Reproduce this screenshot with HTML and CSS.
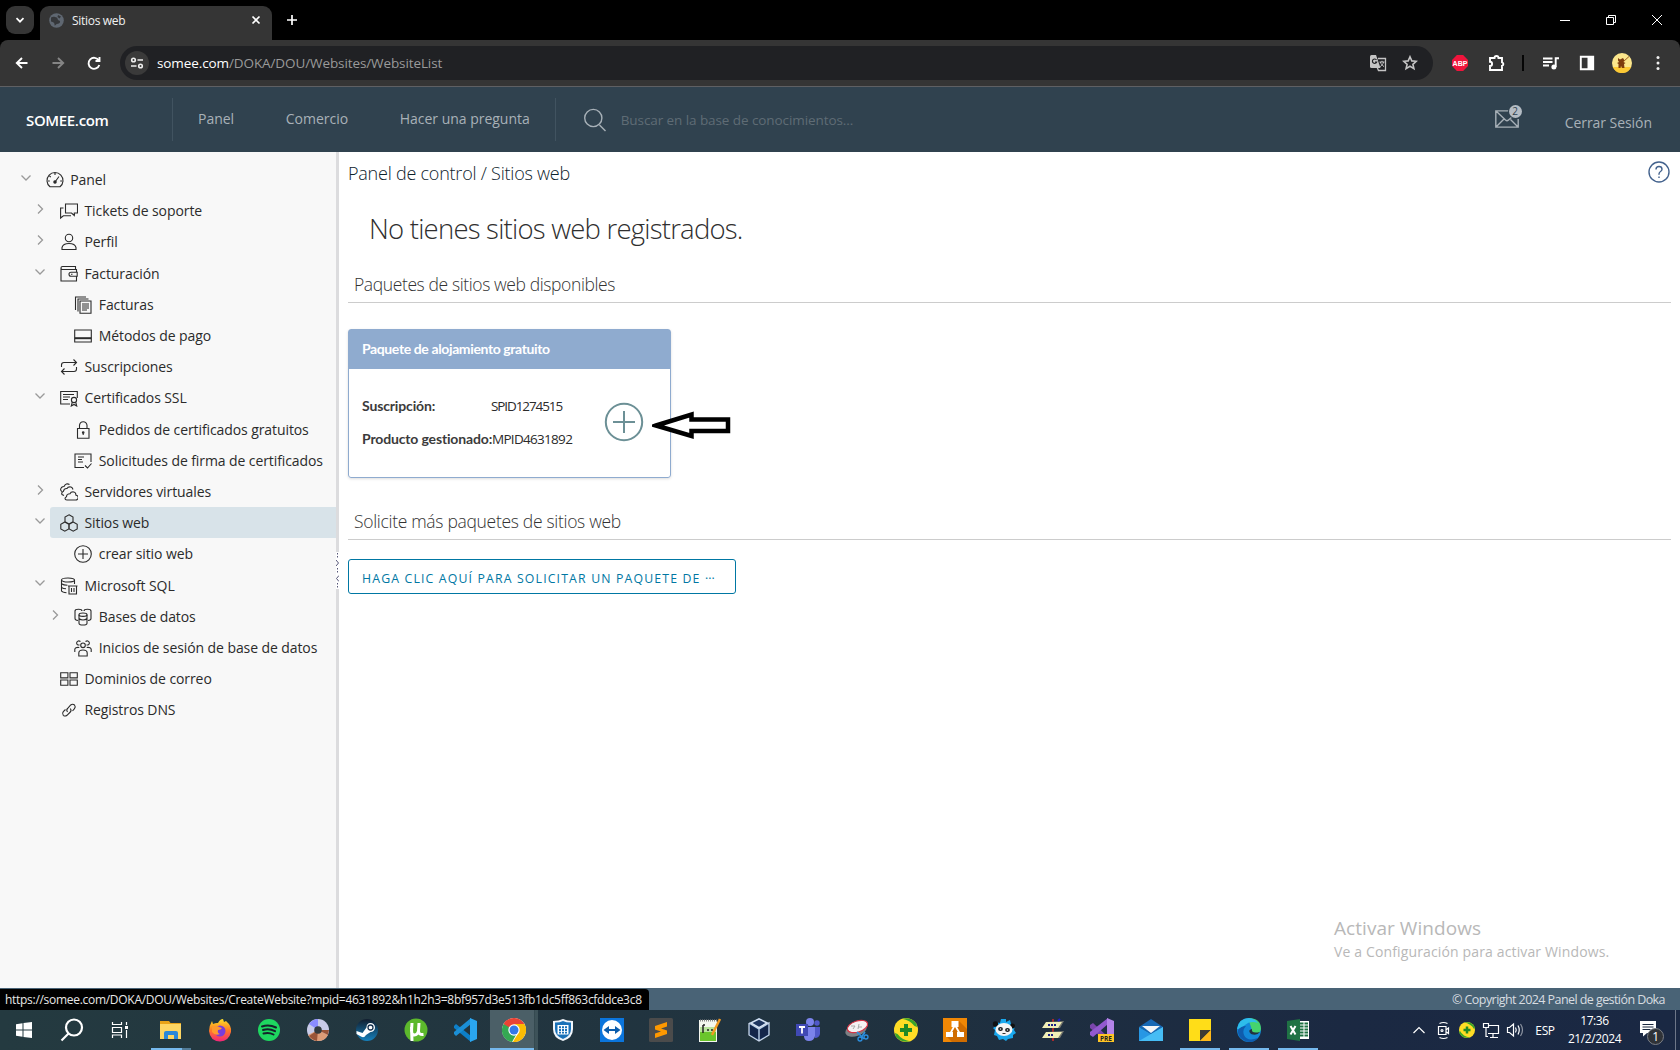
FILE: index.html
```html
<!DOCTYPE html>
<html lang="es">
<head>
<meta charset="utf-8">
<title>Sitios web</title>
<link rel="stylesheet" href="styles.css">
</head>
<body>
<svg class="defs" width="0" height="0">
  <symbol id="down" viewBox="0 0 16 16"><path d="M3.5 5.5 8 10l4.500-4.500"/></symbol>
  <symbol id="right" viewBox="0 0 16 16"><path d="M6 3.500 10.500 8 6 12.500"/></symbol>
</svg>

<div class="tabstrip">
  <button class="tab-search"><svg width="10" height="10" viewBox="0 0 10 10"><path d="M1.500 3.200 5 6.700l3.500-3.500"/></svg></button>
  <div class="tab">
    <svg class="globe" width="15" height="15" viewBox="0 0 15 15"><circle cx="7.500" cy="7.500" r="7.300" fill="#5f6771"/><path fill="#35373a" d="M2 4.500c3-1.500 4 0 5.500 0S8 7 10 7.500s1 3-1 3.200-2 1.500-3.500 1.800C6 10 4.500 9 2 8.500z M9 2l3 1.500-1.500 2L8.500 4z"/></svg>
    <span class="tab-title">Sitios web</span>
    <svg class="tab-close" width="10" height="10" viewBox="0 0 10 10"><path d="M1.500 1.500l7 7M8.500 1.500l-7 7"/></svg>
  </div>
  <svg class="tab-new" width="12" height="12" viewBox="0 0 12 12"><path d="M6 1v10M1 6h10"/></svg>
  <div class="window-buttons">
    <svg width="46" height="40" viewBox="0 0 46 40"><path d="M18 20.500h10"/></svg>
    <svg width="46" height="40" viewBox="0 0 46 40"><path d="M18.500 17.500h7v7h-7zM20.500 17v-1.500h7v7H26"/></svg>
    <svg width="46" height="40" viewBox="0 0 46 40"><path d="M18 15l10 10M28 15l-10 10"/></svg>
  </div>
</div>

<div class="toolbar-wrap"><div class="toolbar">
  <div class="nav-buttons">
    <svg width="36" height="20" viewBox="0 0 36 20"><path d="M23.500 10H13M18 5l-5.200 5 5.200 5"/></svg>
    <svg class="dim" width="36" height="20" viewBox="0 0 36 20"><path d="M12.500 10H23M18 5l5.200 5-5.200 5"/></svg>
    <svg width="36" height="20" viewBox="0 0 36 20"><path d="M22.800 7.500A5.500 5.500 0 1 0 23.300 12M23.500 4v4h-4"/></svg>
  </div>
  <div class="omnibox">
    <span class="site-info"><svg width="14" height="14" viewBox="0 0 14 14"><circle cx="3.500" cy="4" r="1.800"/><path d="M7.500 4H13M1 10h5.500"/><circle cx="10.500" cy="10" r="1.800"/></svg></span>
    <span class="url"><b>somee.com</b>/DOKA/DOU/Websites/WebsiteList</span>
    <svg class="translate" width="18" height="18" viewBox="0 0 18 18"><path fill="#c4c4c4" d="M1 2.500Q1 1 2.500 1H7l4.500 13H2.500Q1 14 1 12.500z"/><path d="M9 4.500h7.500v12H9.500L8 13" fill="none" stroke="#c4c4c4" stroke-width="1.300"/><path d="M10.500 8h5M13 6.800V8M11.300 8c.7 2 2 3.600 3.700 4.600M14.600 8c-.5 2-1.800 3.700-3.400 4.600" fill="none" stroke="#c4c4c4"/><path d="M7.500 6A2.200 2.200 0 1 0 7.700 8H6" fill="none" stroke="#202124" stroke-width="1.200"/></svg>
    <svg class="star" width="16" height="16" viewBox="0 0 16 16"><path d="M8 1.800l1.800 4.100 4.500.4-3.400 3 1 4.300L8 11.300l-3.900 2.300 1-4.300-3.400-3 4.500-.4z"/></svg>
  </div>
  <div class="extensions">
    <svg width="16" height="16" viewBox="0 0 16 16"><path fill="#f0143c" d="M4.900 0h6.200L16 4.900v6.200L11.100 16H4.900L0 11.100V4.900z"/><text x="8" y="10.600" class="abp">ABP</text></svg>
    <svg width="18" height="18" viewBox="0 0 18 18"><path class="line" d="M2 4h4.500a2 2 0 0 1 4 0H14v4.300a1.800 1.800 0 0 1 0 3.500V16H2v-4a2.100 2.100 0 0 0 0-4.200z"/></svg>
    <i class="divider"></i>
    <svg width="16" height="16" viewBox="0 0 16 16"><path class="line" d="M0 3.500h9.500M0 7h9.500M0 10.500h6M12.700 12V3.200H16"/><circle cx="10.900" cy="12" r="2.500" fill="#fff"/></svg>
    <svg width="16" height="16" viewBox="0 0 16 16"><path class="line" d="M1.800 1.800h12.400v12.400H1.800z"/><path fill="#fff" d="M8.500 2h6v12h-6z"/></svg>
    <svg class="avatar" width="20" height="20" viewBox="0 0 20 20"><circle cx="10" cy="10" r="10" fill="#fbe68c"/><path fill="#fcc934" d="M.8 14h18.400A10 10 0 0 1 .8 14z"/><path fill="#7d3b0d" d="M6 5l2 1.500L11 5l1.500 2.500L11.500 9l2 1-1.500 1 .5 4H10l-1-2-.5 2H6.500v-4L5 10l2-1-1-1.500z"/><path d="M11 9l6-5.500" stroke="#9a5b1e"/></svg>
    <svg class="kebab" width="4" height="16" viewBox="0 0 4 16"><circle cx="2" cy="2.500" r="1.500"/><circle cx="2" cy="8" r="1.500"/><circle cx="2" cy="13.500" r="1.500"/></svg>
  </div>
</div></div>

<header class="site-header">
  <div class="brand">SOMEE.com</div>
  <nav class="site-nav"><a>Panel</a><a>Comercio</a><a>Hacer una pregunta</a></nav>
  <div class="site-search">
    <svg width="24" height="24" viewBox="0 0 24 24"><circle cx="10.300" cy="10" r="8.600"/><path d="M16.500 17l6 6"/></svg>
    <span>Buscar en la base de conocimientos...</span>
  </div>
  <div class="mail">
    <svg width="24" height="18" viewBox="0 0 24 18"><path d="M14 .9H.8v16.200h22.400V9M1 1l9.500 9q1.500 1.300 3 0l3.500-3M1 17l8-8M23 17l-7.500-7.500"/></svg>
    <span class="mail-badge">2</span>
  </div>
  <a class="logout">Cerrar Sesión</a>
</header>

<div class="workspace">
  <aside class="sidebar">
    <div class="row l1"><svg class="chev"><use href="#down"/></svg><div class="item"><svg class="icon" viewBox="0 0 18 18"><path d="M4 15.800A8 8 0 1 1 14 15.800zM9 2v2M3.500 5l1.300 1.200M2 10h1.800M14.200 10H16M9 11l4-5.500"/><circle cx="9" cy="11" r="1.200" fill="#2b2b2b"/></svg>Panel</div></div>
    <div class="row l2"><svg class="chev"><use href="#right"/></svg><div class="item"><svg class="icon" viewBox="0 0 18 18"><path d="M5.500 2h12v9h-3.200v2.500L11.500 11h-6zM3.500 6H.6v10l2.800-2.300H11"/></svg>Tickets de soporte</div></div>
    <div class="row l2"><svg class="chev"><use href="#right"/></svg><div class="item"><svg class="icon" viewBox="0 0 18 18"><circle cx="9" cy="5" r="3.700"/><path d="M2 16.500v-2q1-4 7-4t7 4v2z"/></svg>Perfil</div></div>
    <div class="row l2"><svg class="chev"><use href="#down"/></svg><div class="item"><svg class="icon" viewBox="0 0 18 18"><path d="M16.500 7V4.500H2.500Q1 4.500 1 3t1.500-1.500h13v3M1 3v13h15.500v-4.500M17.200 7.200H11q-2 0-2 2t2 2h6.200zM11 9.200h1.500"/></svg>Facturación</div></div>
    <div class="row l3"><div class="item"><svg class="icon" viewBox="0 0 18 18"><path d="M1.500 14V1H12M4 15.500V3h10.500M6 5h11v12.300H6zM8 8h7M8 10h7M8 12h7M8 14h5"/></svg>Facturas</div></div>
    <div class="row l3"><div class="item"><svg class="icon" viewBox="0 0 18 18"><path d="M.7 3h16.600v12H.7z"/><path d="M.7 11.200h16.600" stroke-width="2"/></svg>Métodos de pago</div></div>
    <div class="row l2"><div class="item"><svg class="icon" viewBox="0 0 18 18"><path d="M1.500 9V7q0-2.500 2.500-2.500h12.500M13.500 1.500l3 3-3 3M16.500 9v2q0 2.500-2.500 2.500H1.500M4.500 10.500l-3 3 3 3"/></svg>Suscripciones</div></div>
    <div class="row l2"><svg class="chev"><use href="#down"/></svg><div class="item"><svg class="icon" viewBox="0 0 18 18"><path d="M10 15H.7V2.500h16.600V9M3 5.500h11M3 8h7M3 10.500h5"/><circle cx="14" cy="11" r="2.600"/><path d="M12.300 13l-1 4 2.700-1.500 2.700 1.500-1-4"/></svg>Certificados SSL</div></div>
    <div class="row l3"><div class="item"><svg class="icon" viewBox="0 0 18 18"><path d="M3.500 7.500h11.500v9.700H3.500zM5.500 7.500V4.200Q6 .8 9.200.8T13 4.200v3.300M9.200 11v3"/><circle cx="9.200" cy="11.500" r=".8"/></svg>Pedidos de certificados gratuitos</div></div>
    <div class="row l3"><div class="item"><svg class="icon" viewBox="0 0 18 18"><path d="M10 15.500H1V2h16v8M4 5h6M4 7.500h4M4 10h5M11 13.500l2.500 2.500 4-4.500"/></svg>Solicitudes de firma de certificados</div></div>
    <div class="row l2"><svg class="chev"><use href="#right"/></svg><div class="item"><svg class="icon" viewBox="0 0 18 18"><path d="M7 17h8.500a2.400 2.400 0 0 0 .5-4.800q0-3.200-3-3.500-2.300 0-3 2-3.500 0-3.500 3-1.500.5-1.500 1.800T7 17zM4 12.500l-2-1q-1-2 1.500-3.300Q4 5.300 7 5.500q1-2 4-1.500 1.500.7 2 2.500M2 8.500Q-.5 7 1.500 4.500q1-1 2.500-1Q6-.5 9.500 1.500"/></svg>Servidores virtuales</div></div>
    <div class="row l2"><svg class="chev"><use href="#down"/></svg><div class="item selected"><svg class="icon" viewBox="0 0 18 18"><path d="M9 .8l4 2.300v4.600L9 10 5 7.700V3.100zM4.800 8l4 2.300v4.600l-4 2.300-4-2.300v-4.600zM13.200 8l4 2.300v4.600l-4 2.300-4-2.300v-4.600z"/></svg>Sitios web</div></div>
    <div class="row l3"><div class="item"><svg class="icon" viewBox="0 0 18 18"><circle cx="9" cy="9" r="8.300"/><path d="M9 4v10M4 9h10"/></svg>crear sitio web</div></div>
    <div class="row l2"><svg class="chev"><use href="#down"/></svg><div class="item"><svg class="icon" viewBox="0 0 18 18"><ellipse cx="8" cy="3" rx="6.500" ry="2"/><path d="M1.500 3v11q1 1.500 5 1.800M14.500 3v4M1.500 6.700q2 1.500 6 1.500M1.500 10.500q2 1.300 4.500 1.300M8 9h9.500M9 9v8h7.500V9M11.500 11v4M14 11v4"/></svg>Microsoft SQL</div></div>
    <div class="row l3"><svg class="chev"><use href="#right"/></svg><div class="item"><svg class="icon" viewBox="0 0 18 18"><path d="M4 12.500q-3-.2-3-2V3q0-1.800 3.500-1.800T8 3M14 12.500q3-.2 3-2V3q0-1.800-3.500-1.800T10 3"/><ellipse cx="9" cy="6.700" rx="4" ry="1.700"/><path d="M5 6.700v8.500q0 1.800 4 1.800t4-1.800V6.700M5 10.500q1.500 1.500 4 1.500t4-1.500"/></svg>Bases de datos</div></div>
    <div class="row l3"><div class="item"><svg class="icon" viewBox="0 0 18 18"><circle cx="9" cy="6.300" r="2.300"/><path d="M4.800 17v-3q0-3 4.200-3t4.200 3v3zM5.500 6Q2 6 2.800 3.200 4 1 6.500 2.500M12.500 6q3.500 0 2.700-2.800Q14 1 11.500 2.500M.8 13v-2.500q0-2.500 4.500-2M17.200 13v-2.500q0-2.500-4.500-2"/></svg>Inicios de sesión de base de datos</div></div>
    <div class="row l2"><div class="item"><svg class="icon" viewBox="0 0 18 18"><path d="M.7 2.700h7.200v5.200H.7zM10 2.700h7.300v5.200H10zM.7 10h7.200v5.200H.7zM10 10h7.300v5.200H10z"/></svg>Dominios de correo</div></div>
    <div class="row l2"><div class="item"><svg class="icon" viewBox="0 0 18 18"><path d="M7.500 11q-1.500-2 0-3.500L10.700 4q2-1.500 3.800 0 1.500 2 0 3.700L12.500 10M10.300 7.500q1.500 2 0 3.500L7 14.300q-2 1.500-3.700 0-1.500-2 0-3.700L5.500 8.500"/></svg>Registros DNS</div></div>
  </aside>
  <div class="splitter"><svg width="3" height="37" viewBox="0 0 3 37"><path fill="#fff" d="M0 0h3v37H0z"/><path d="M1.500 1v6M1.500 16v5M1.500 31v5" stroke="#555577" stroke-dasharray="1.500 1.500"/><path d="M0 8l2.500 3L0 14M3 23.500L.5 26.500l2.500 3" fill="none" stroke="#555577"/></svg></div>
  <main class="content">
    <div class="crumbs"><span>Panel de control / Sitios web</span>
      <svg width="22" height="22" viewBox="0 0 22 22"><circle cx="11" cy="11" r="10"/><path d="M8 8.500Q8 5.500 11 5.500t3 2.700q0 1.300-1.500 2.300T11 13v.8M11 15.500v1.400"/></svg>
    </div>
    <h1>No tienes sitios web registrados.</h1>
    <h2>Paquetes de sitios web disponibles</h2>
    <section class="card">
      <h3>Paquete de alojamiento gratuito</h3>
      <div class="card-body">
        <dl><dt>Suscripción:</dt><dd class="subscription">SPID1274515</dd><dt>Producto gestionado:</dt><dd>MPID4631892</dd></dl>
        <svg width="40" height="40" viewBox="0 0 40 40"><circle cx="20" cy="20" r="18.200"/><path d="M20 9v22M9 20h22"/></svg>
      </div>
      <svg class="pointer" width="80" height="30" viewBox="0 0 80 30"><path d="M4 15.500L39.500 4.500V9.500H76V21H39.500v5z"/></svg>
    </section>
    <h2 class="more">Solicite más paquetes de sitios web</h2>
    <button class="request">HAGA CLIC AQUÍ PARA SOLICITAR UN PAQUETE DE <span>···</span></button>
    <div class="watermark"><strong>Activar Windows</strong><span>Ve a Configuración para activar Windows.</span></div>
  </main>
</div>

<footer class="site-footer">
  <span class="status">https://somee.com/DOKA/DOU/Websites/CreateWebsite?mpid=4631892&amp;h1h2h3=8bf957d3e513fb1dc5ff863cfddce3c8</span>
  <span class="copy">© Copyright 2024 Panel de gestión Doka</span>
</footer>

<div class="taskbar">
  <div class="system">
    <svg width="48" height="40" viewBox="0 0 48 40"><path fill="#fff" d="M16 14.300l6.500-1v6.200H16zM23.500 13.100l8.500-1.200v7.600h-8.500zM16 20.500h6.500v6.200l-6.500-1zM23.500 20.500H32v7.600l-8.500-1.200z"/></svg>
    <svg width="48" height="40" viewBox="0 0 48 40" class="w"><circle cx="26" cy="17.500" r="8"/><path d="M20.500 23.500L13.500 30.500"/></svg>
    <svg width="48" height="40" viewBox="0 0 48 40" class="w thin"><path d="M16.500 12v2.500h9V12M16.500 28v-3h9v3M16.500 17.500h9v5h-9zM30.500 12v3M30.500 20v8"/><path d="M29 16h3v3h-3z" fill="#fff" stroke="none"/></svg>
  </div>
  <div class="apps">
    <span class="app running split"><svg viewBox="0 0 24 24"><path fill="#e8a317" d="M1 3h9l1.500 2H22v3H1z"/><path fill="#fdd663" d="M1 6h21v15H1z"/><path fill="#2b88d8" d="M5 21v-6q0-2 2-2h10q2 0 2 2v6h-4v-4H9v4z"/></svg></span>
    <span class="app"><svg viewBox="0 0 24 24"><defs><linearGradient id="ff" x2="0" y2="1"><stop stop-color="#ffe226"/><stop offset=".5" stop-color="#ff7b24"/><stop offset="1" stop-color="#f2247b"/></linearGradient></defs><path fill="url(#ff)" d="M4 3l1 3q3-1.500 5-1Q12 1 15 1l1 3 2-1q6 5 5 11-2 9-11 9.500Q2 23 1 13 1 8 4 3z"/><circle cx="12" cy="13" r="5.500" fill="#7a3cdb"/><path fill="#ff9a2e" d="M4 9q5-2 7 0l3 1q-1 2-4 2-1 3 2 4-5 2-8-2z"/></svg></span>
    <span class="app"><svg viewBox="0 0 24 24"><circle cx="12" cy="12" r="11" fill="#1ed760"/><path d="M5 8.500q7-2.500 14 1M6 12q6-2 12 1.200M6.500 15.500q5.500-1.500 10 1" fill="none" stroke="#15222a" stroke-width="2" stroke-linecap="round"/></svg></span>
    <span class="app"><svg viewBox="0 0 24 24"><circle cx="12" cy="12" r="11" fill="#c8cbe8"/><path fill="#8b8cff" d="M12 12L3 6q4-5 9-5z"/><path fill="#dd9c77" d="M12 12L2 17q3 6 10 6t10-6z"/><path fill="#9b5538" d="M12 12l-1 11q-5-1-8-5zM12 12l10 5 1-5z"/><circle cx="12" cy="12" r="3.800" fill="#333b3e"/></svg></span>
    <span class="app"><svg viewBox="0 0 24 24"><defs><linearGradient id="st" x2="0" y2="1"><stop stop-color="#111d2e"/><stop offset="1" stop-color="#1581bd"/></linearGradient></defs><circle cx="12" cy="12" r="11" fill="url(#st)"/><path fill="#fff" d="M1.500 13l6 2 4-5.500q0-4.500 4-4.500a4.500 4.500 0 0 1 0 9L11 17q-2 3.500-5 1.500L1.500 16z"/><circle cx="15.500" cy="9.500" r="2.500" fill="#fff" stroke="#17314e" stroke-width="1.300"/></svg></span>
    <span class="app"><svg viewBox="0 0 24 24"><circle cx="12" cy="12" r="11.500" fill="#5cb82c"/><path d="M8 5l-.5 8q0 4 3 4t4-4l.5-8M14.500 13q0 4 5 3.500M7.500 9l.5 14" fill="none" stroke="#fff" stroke-width="3"/></svg></span>
    <span class="app"><svg viewBox="0 0 24 24"><path fill="#0d7fc8" d="M1 8l2-2 15 12V24L1 10z"/><path fill="#1b8fd6" d="M1 16l2 2L18 6V0L1 14z"/><path fill="#2aa6f0" d="M17 0l7 3v18l-7 3z"/></svg></span>
    <span class="app active"><svg viewBox="0 0 24 24"><circle cx="12" cy="12" r="12" fill="#fff"/><path fill="#ea4335" d="M12 12H7L1.600 6a12 12 0 0 1 20.800 0z"/><path fill="#34a853" d="M12 12l2 5-4 7A12 12 0 0 1 1.600 6z"/><path fill="#fbbc04" d="M12 6h10.400A12 12 0 0 1 10.800 24L17 14z"/><circle cx="12" cy="12" r="5.700" fill="#fff"/><circle cx="12" cy="12" r="4.500" fill="#3478e8"/></svg></span>
    <span class="app"><svg viewBox="0 0 24 24"><path fill="#f1f6fb" d="M2 3q6 0 10-2 4 2 10 2v8q0 9-10 12Q2 20 2 11z"/><path fill="#1971b8" d="M4 4.500q5 0 8-1.500 3 1.500 8 1.500V11q0 7-8 10-8-3-8-10z"/><path fill="#fff" d="M6.500 7h11v9.500h-11z"/><path fill="#1971b8" d="M8 8.300h2v2H8zM11 8.300h2v2h-2zM14 8.300h2v2h-2zM8 11h2v2H8zM11 11h2v2h-2zM14 11h2v2h-2zM8 13.700h2v1.800H8zM11 13.700h2v1.800h-2zM14 13.700h2v1.800h-2z"/></svg></span>
    <span class="app"><svg viewBox="0 0 24 24"><path fill="#0b75dc" d="M0 0h24v24H0z"/><circle cx="12" cy="12" r="10" fill="#fff"/><path fill="#0b5cab" d="M3.500 12L9 8v3h6V8l5.500 4-5.500 4v-3H9v3z"/></svg></span>
    <span class="app"><svg viewBox="0 0 24 24"><rect width="24" height="24" rx="1.500" fill="#4b4b4b"/><path fill="#ff9800" d="M6 8l12-4v4.500l-6 2 6 2V16L6 20v-4.500l6-2-6-2z"/></svg></span>
    <span class="app"><svg viewBox="0 0 24 24"><path fill="#f4f6ef" d="M1 2h18v22H1z"/><path fill="#6ac52c" d="M2 14h16v9H2z"/><path fill="#b9e49c" d="M2 9h16v5H2z"/><path d="M2 2.500h17" stroke="#888" stroke-width="2" stroke-dasharray="1 1"/><path d="M5 7v8M5 7h2M9 12h2M13 12h2" stroke="#222" stroke-width="1.500"/><path d="M22 1l-8 16" stroke="#f29a22" stroke-width="2.500"/></svg></span>
    <span class="app"><svg viewBox="0 0 24 24"><path fill="#183a68" d="M12 0l10 5v12l-10 6-10-6V5z"/><path fill="#d6e3f3" d="M12 0l10 5-10 6L2 5z"/><path fill="#1d3560" d="M12 1.800L18.500 5 12 8.800 5.500 5z"/><path fill="#14264a" d="M3 7l8 5v9l-8-4.500zM21 7l-8 5v9l8-4.500z"/><path d="M2 5v12l10 6 10-6V5L12 11 2 5M12 11v12" fill="none" stroke="#c6d4e8" stroke-width="1.300"/></svg></span>
    <span class="app"><svg viewBox="0 0 24 24"><circle cx="14" cy="4" r="4" fill="#7b83eb"/><circle cx="21" cy="5" r="2.700" fill="#5059c9"/><path fill="#7b83eb" d="M8 9h11v9q-1 5-6 5t-5-5z"/><path fill="#5059c9" d="M19 9h5v7q-1 4-5 4z"/><path fill="#4049b4" d="M0 6h12v12H0z"/><path d="M3 9h6M6 9v6.500" stroke="#fff" stroke-width="1.800"/></svg></span>
    <span class="app"><svg viewBox="0 0 24 24"><ellipse cx="11" cy="12" rx="11" ry="6" transform="rotate(-18 11 12)" fill="#7c7f84"/><ellipse cx="12.500" cy="8.500" rx="10.500" ry="5.500" transform="rotate(-18 12.500 8.500)" fill="#f5f1f2" stroke="#d63445" stroke-width="1.200"/><path d="M6 8h4l-2 3M14 6l-1 5M13 9h4" stroke="#aaa" fill="none"/><path d="M12 14l7 7M20 14l-4 6" stroke="#2c8fe0" stroke-width="1.700"/><circle cx="15" cy="21" r="2" fill="none" stroke="#2c8fe0" stroke-width="1.300"/><circle cx="21" cy="19" r="2" fill="none" stroke="#2c8fe0" stroke-width="1.300"/></svg></span>
    <span class="app"><svg viewBox="0 0 24 24"><circle cx="12" cy="12" r="12" fill="#ffdd25"/><path fill="#3aa52a" d="M8 .7Q18-1 22.500 6L23 9l-2.500-1Q16 2 8 .7zM16 23.300Q6 25 1.500 18L1 15l2.500 1Q8 22 16 23.300z"/><path d="M12 6v12M6 12h12" stroke="#218a25" stroke-width="4"/></svg></span>
    <span class="app"><svg viewBox="0 0 24 24"><path fill="#f08705" d="M0 0h24v24H0z"/><path fill="#d06c00" d="M16 3l8 8v13H9l-6-6z"/><path d="M12 7L7 16M12 7l5 9" stroke="#fff" stroke-width="1.800"/><path fill="#fff" d="M8.500 3h7v6h-7zM3 14h7v5H3zM14 14h7v5h-7z"/></svg></span>
    <span class="app"><svg viewBox="0 0 24 24"><path fill="#19a8ee" d="M9 1h5v3l4-2 1 4 4 2-1 4 2 3-3 2v3l-5 1-2 2-3-2-4 1-2-4-3-1 1-5-2-2 3-2-1-4 5 1z"/><circle cx="3.500" cy="6" r="2.700" fill="#111"/><circle cx="20.500" cy="8" r="2.500" fill="#111"/><ellipse cx="12" cy="11.500" rx="8.500" ry="6.500" fill="#f4f4f4"/><ellipse cx="8.500" cy="11" rx="2.400" ry="2" fill="#15191b"/><ellipse cx="15.500" cy="12" rx="2.400" ry="2" fill="#15191b"/><circle cx="8.500" cy="11" r=".8" fill="#eee"/><circle cx="15.500" cy="12" r=".8" fill="#eee"/><path d="M10.500 15.500h3" stroke="#333"/></svg></span>
    <span class="app"><svg viewBox="0 0 24 24"><path d="M12 1v22" stroke="#d42a2a" stroke-width="1.500"/><path fill="#77776f" d="M6 4l17-1-4 7H4zM6 14l17-1-4 7H4z"/><path fill="#f1efb7" d="M5 4h16l-4 6H1zM5 14h16l-4 6H1z"/><path d="M7 7h8M7 17h6" stroke="#1d2388" stroke-width="2" stroke-dasharray="2 1"/><path d="M17 3l2-2" stroke="#2222cc" stroke-width="2"/></svg></span>
    <span class="app"><svg viewBox="0 0 24 24"><path fill="#7b46ad" d="M0 7l3-2 14 13v6L0 10z"/><path fill="#9259cf" d="M0 17l3 2L18 6V0L0 14z"/><path fill="#b483e8" d="M17 0l7 3v18l-7 3z"/><path fill="#ffc425" d="M8 16h16v8H8z"/><text class="pre" x="16" y="22.500">PRE</text></svg></span>
    <span class="app"><svg viewBox="0 0 24 24"><path fill="#1668b5" d="M0 9l12-8 12 8-12 7z"/><path fill="#f2f5f8" d="M3 8h18l-9 7z"/><path fill="#2797e4" d="M0 9l12 7 12-7v14H0z"/><path fill="#46bdf5" d="M0 23L24 9v14z"/></svg></span>
    <span class="app running"><svg viewBox="0 0 24 24"><path fill="#ffdd18" d="M1 1h22v22H1z"/><path fill="#3e3a34" d="M12 12h11L12 23z"/><path fill="#ffb91a" d="M23 12v11H12z"/></svg></span>
    <span class="app running"><svg viewBox="0 0 24 24"><circle cx="12" cy="12" r="12" fill="#1388d8"/><path fill="#45d46d" d="M11 0q13 0 13 11-1 6-9 5-2-1 0-4z"/><path fill="#2ebdeb" d="M0 11Q2 0 12 0q7 1 9 5-8-3-13 2-4 4-8 4z"/><path fill="#0f5cad" d="M9 8q-4 4-2 9 3 7 14 3-5 6-13 3-8-4-7-11 3-4 8-4z"/><path fill="#223240" d="M15 11q-1 5 8 3-3 4-9 2-4-4 1-5z"/></svg></span>
    <span class="app running"><svg viewBox="0 0 24 24"><path fill="#fff" d="M10 3h13v18H10z"/><path d="M14 5.500h8M14 8.500h8M14 11.500h8M14 14.500h8M14 17.500h8" stroke="#1f7244" stroke-width="2" stroke-dasharray="3.500 1"/><path fill="#1f7244" d="M1 3l13-2v22L1 21z"/><path d="M4.500 8l5 8.500M9.500 8l-5 8.500" stroke="#fff" stroke-width="2"/></svg></span>
  </div>
  <div class="tray">
    <svg width="24" height="24" viewBox="0 0 24 24" class="w thin"><path d="M6.500 15l5.500-5.500 5.500 5.500"/></svg>
    <svg width="24" height="24" viewBox="0 0 24 24" class="w thin"><path d="M8.500 5.500q4-2 8 0M8.500 19.500q4 2 8 0M7.500 8.500H15v8H7.500zM15.500 11.500l2-1.500v5.500l-2-1.500"/><circle cx="11" cy="12.500" r="1"/></svg>
    <svg width="24" height="24" viewBox="0 0 24 24"><circle cx="12" cy="12" r="8" fill="#ffdd25"/><path fill="#3aa52a" d="M9 4.500q8-1.500 11 5l-1 1.500Q16 5.500 9 4.500zM15 19.500q-8 1.500-11-5L5 13q3 5.500 10 6.500z"/><path d="M12 8.500v7M8.500 12h7" stroke="#218a25" stroke-width="2.500"/></svg>
    <svg width="24" height="24" viewBox="0 0 24 24" class="w thin"><path d="M9 7.500h10.500v8H9M14 15.500V19M11 19.500h8M4.500 5.500h5v4h-5zM7 9.500v9h2"/></svg>
    <svg width="24" height="24" viewBox="0 0 24 24" class="w thin"><path d="M4.500 9.500h2l4-3.500v12l-4-3.500h-2zM12.500 9.500q1.500 2.500 0 5M15 7.500q2.500 4.500 0 9"/><path d="M17.500 6q4 6 0 12" opacity=".5"/></svg>
    <span class="lang">ESP</span>
    <div class="clock"><span>17:36</span><span>21/2/2024</span></div>
    <svg class="notif" width="26" height="26" viewBox="0 0 26 26"><path fill="#fff" d="M1 1h16v12H8l-4 3.500V13H1z"/><path d="M3.500 4.500h11M3.500 7h11M3.500 9.500h8" stroke="#1b2940"/><circle cx="16.500" cy="16.500" r="8" fill="#2f3237" stroke="#7b7f86"/><text x="16.500" y="21">1</text></svg>
  </div>
</div>
</body>
</html>
```
FILE: styles.css
```css
* { box-sizing: border-box; }
body { margin: 0; width: 1680px; height: 1050px; overflow: hidden; display: flex; flex-direction: column; background: #fff; font: 14px "Open Sans", "Noto Sans", sans-serif; color: #2b2b2b; }
svg { flex: none; fill: none; display: block; }
button { font: inherit; }
.defs { position: absolute; }

/* browser tabs */
.tabstrip { height: 40px; flex: none; display: flex; align-items: center; background: #000; padding-left: 6px; }
.tab-search { width: 28px; height: 28px; padding: 9px; border: 0; border-radius: 9px; background: #353535; }
.tab-search svg, .tab-close { stroke: #fff; stroke-width: 1.7; }
.tab { width: 232px; height: 34px; margin: 6px 0 0 6px; padding: 0 11px 6px 9px; display: flex; align-items: center; background: #353535; border-radius: 9px 9px 0 0; }
.tab-title { flex: 1; margin-left: 8px; font-size: 12px; letter-spacing: -.3px; color: #f1f1f1; }
.tab-new { margin-left: 14px; stroke: #fff; stroke-width: 1.7; }
.window-buttons { display: flex; margin-left: auto; stroke: #fff; }

/* browser toolbar */
.toolbar-wrap { flex: none; background: #000; }
.toolbar { height: 47px; display: flex; align-items: center; background: #353535; border-bottom: 1px solid #5f6063; padding-left: 4px; border-radius: 8px 8px 0 0; }
.nav-buttons { display: flex; stroke: #fff; stroke-width: 1.9; }
.dim { stroke: #858585; }
.omnibox { width: 1313px; height: 34px; margin-left: 8px; padding: 0 15px 0 5px; border-radius: 17px; background: #202124; display: flex; align-items: center; }
.site-info { width: 24px; height: 24px; padding: 5px; border-radius: 12px; background: #3a3a3a; stroke: #eee; stroke-width: 1.6; }
.url { flex: 1; margin-left: 8px; font-size: 13.5px; letter-spacing: -.1px; color: #9a9a9a; }
.url b { font-weight: 400; color: #fff; }
.star { margin-left: 15px; stroke: #c4c4c4; stroke-width: 1.6; }
.extensions { display: flex; align-items: center; margin-left: 19px; }
.extensions svg + svg { margin-left: 20px; }
.extensions .divider { width: 2px; height: 16px; margin: 0 19px 0 16px; background: #050505; }
.extensions svg.avatar { margin-left: 17px; }
.extensions svg.kebab { margin-left: 24px; fill: #f0f0f0; }
.line { stroke: #fff; stroke-width: 1.9; }
.abp { font: 700 7px "Liberation Sans", sans-serif; text-anchor: middle; fill: #fff; }

/* site header */
.site-header { height: 65px; flex: none; display: flex; align-items: center; background: #30424f; color: #a8b1b8; }
.brand { width: 173px; height: 43px; padding-left: 26px; line-height: 45px; border-right: 1px solid #415360; font-weight: 600; font-size: 15px; letter-spacing: -.35px; color: #fff; }
.site-nav { height: 43px; display: flex; gap: 51.7px; padding: 0 25px; line-height: 41px; letter-spacing: -.02px; border-right: 1px solid #415360; }
.site-search { display: flex; align-items: center; gap: 14px; margin-left: 27px; stroke: #a8b1b8; stroke-width: 1.4; }
.site-search span { padding-top: 1px; font-size: 13.5px; letter-spacing: -.08px; color: #5f6c75; }
.mail { position: relative; margin: -2px 0 0 auto; stroke: #a8b1b8; stroke-width: 1.4; }
.mail-badge { position: absolute; left: 14px; top: -5px; width: 13px; height: 13px; border-radius: 50%; background: #b4bcc4; box-shadow: 0 0 0 1px #30424f; color: #30424f; font-size: 10px; line-height: 13px; text-align: center; }
.logout { margin: 6px 28px 0 46px; letter-spacing: -.05px; }

/* sidebar tree */
.workspace { flex: 1; min-height: 0; display: flex; }
.sidebar { width: 336px; background: #f8f8f8; padding-top: 12px; }
.row { height: 31.2px; display: flex; align-items: stretch; }
.l1 { padding-left: 18px; }
.l2 { padding-left: 32.3px; }
.l3 { padding-left: 46.6px; }
.chev { width: 16px; height: 16px; margin: 6px -16px 0 0; stroke: #9a9a9a; stroke-width: 1.3; }
.item { flex: 1; margin-left: 18px; padding-left: 9.7px; display: flex; align-items: center; gap: 6.5px; letter-spacing: -.09px; white-space: nowrap; }
.selected { background: #d8e3e9; border-radius: 3px 0 0 3px; }
.icon { width: 18px; height: 18px; margin-top: 1px; stroke: #2b2b2b; stroke-width: 1.1; }
.splitter { width: 3px; background: #dcdcde; padding-top: 400px; }

/* main panel */
.content { flex: 1; position: relative; padding: 9px 9px 0; }
.crumbs { display: flex; justify-content: space-between; height: 22px; line-height: 25px; font-size: 18px; font-weight: 300; letter-spacing: -.23px; color: #0d222c; }
.crumbs svg { margin-right: 1px; stroke: #43628d; stroke-width: 1.4; }
h1, h2, h3, dl, dd { margin: 0; }
h1 { margin: 28px 0 0 21px; height: 40px; line-height: 36px; font-size: 27.5px; font-weight: 300; letter-spacing: -.78px; color: #2f2f2f; }
h2 { margin-top: 19px; height: 33px; padding-left: 6px; line-height: 28px; font-size: 17.5px; font-weight: 300; letter-spacing: -.39px; border-bottom: 1px solid #ccc; color: #333; }
.card { position: relative; width: 323px; height: 149px; margin-top: 26px; border: 1px solid #8fabcf; border-radius: 3px; box-shadow: 0 1px 3px #0002; }
.card h3 { height: 39px; padding-left: 13px; background: #8fabcf; font: 700 14px/37px Lato, sans-serif; letter-spacing: -.38px; color: #fff; }
.card-body { display: flex; justify-content: space-between; align-items: center; padding: 20px 26px 0 13px; }
dl { display: grid; grid-template-columns: 130px auto; grid-auto-rows: 33px; }
dt { font: 700 14px/33px Lato, sans-serif; letter-spacing: -.15px; color: #3b3b3b; white-space: nowrap; }
dd { font-size: 13.5px; line-height: 35px; letter-spacing: -.7px; }
.subscription { margin-left: -1px; letter-spacing: -1.1px; }
.card-body svg { stroke: #6c9096; stroke-width: 2; }
.pointer { position: absolute; left: 303px; top: 80px; fill: #fff; stroke: #000; stroke-width: 4.5; }
.more { margin-top: 29px; letter-spacing: -.31px; }
.request { display: block; width: 388px; height: 35px; margin-top: 19px; padding: 3px 0 0 13px; border: 1px solid #0077a3; border-radius: 3px; background: #fff; color: #0077a3; font-size: 12.3px; letter-spacing: 1.15px; text-align: left; white-space: nowrap; }
.request span { letter-spacing: 0; }
.watermark { position: absolute; left: 995px; top: 764px; display: flex; flex-direction: column; color: #b8b8b8; font-size: 14px; letter-spacing: .14px; line-height: 22px; }
.watermark strong { font-weight: 400; font-size: 19px; line-height: 25px; letter-spacing: .05px; }

/* footer and link preview */
.site-footer { height: 22px; flex: none; display: flex; justify-content: space-between; background: #496376; }
.status { margin-top: 1px; width: 649px; height: 21px; padding-left: 5px; border-radius: 0 4px 0 0; background: #000; color: #e8e8e8; font-size: 12px; line-height: 22px; letter-spacing: -.29px; white-space: nowrap; }
.copy { margin-right: 15px; font-size: 12.5px; line-height: 23px; letter-spacing: -.57px; color: #d8dde1; }

/* Windows taskbar */
.taskbar { height: 40px; flex: none; display: flex; background: linear-gradient(90deg, #243a40, #20323f 50%, #1b2942 80%, #1a2843); }
.system { display: flex; width: 146.5px; }
.w { stroke: #fff; stroke-width: 2.2; }
.thin { stroke-width: 1.2; }
.apps { display: flex; }
.app { width: 49px; height: 40px; display: flex; justify-content: center; align-items: center; }
.app svg { width: 24px; height: 24px; }
.running { background: linear-gradient(#76b9ed, #76b9ed) 4.500px 38px / 40px 2px no-repeat; }
.split { background: linear-gradient(90deg, #76b9ed 31px, #527c98 31px) 4.500px 38px / 40px 2px no-repeat; }
.active { background: linear-gradient(#76b9ed, #76b9ed) .5px 38px / 44px 2px no-repeat, linear-gradient(90deg, #4b5f67 44px, #2c4148 44px, #3d5259 45px) .5px 0 / 48px 40px no-repeat; }
.pre { font: 700 6.500px "Open Sans", sans-serif; text-anchor: middle; fill: #222; }
.tray { margin-left: auto; display: flex; align-items: center; padding-right: 4px; color: #fff; font-size: 12px; letter-spacing: -.4px; }
.lang { width: 36px; text-align: center; }
.clock { width: 63px; display: flex; flex-direction: column; line-height: 18px; text-align: center; }
.notif { margin: 6px 10px 0 13px; }
.notif text { font-size: 12px; fill: #fff; text-anchor: middle; }
.tray::after { content: ""; width: 1px; height: 40px; background: #6d7688; }
```
